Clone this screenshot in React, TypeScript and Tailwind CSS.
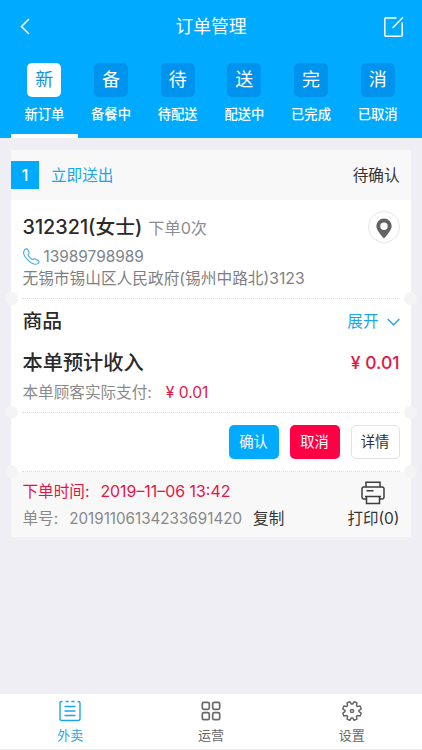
import type { ReactNode } from "react";

interface StatusTab {
  mark: string;
  label: string;
}

const TABS: StatusTab[] = [
  { mark: "新", label: "新订单" },
  { mark: "备", label: "备餐中" },
  { mark: "待", label: "待配送" },
  { mark: "送", label: "配送中" },
  { mark: "完", label: "已完成" },
  { mark: "消", label: "已取消" },
];

function Header() {
  return (
    <header className="h-[138px] bg-[#00aaff] text-white">
      <div className="flex h-[53px] items-center justify-between pl-5 pr-[18px]">
        <svg width="10" height="17" viewBox="0 0 10 17" fill="none" stroke="currentColor" strokeWidth="1.5">
          <path d="M9 1 1.5 8.5 9 16" />
        </svg>
        <h1 className="ml-[8px] text-[17.8px] leading-none">订单管理</h1>
        <svg width="20" height="22" viewBox="0 0 20 22" fill="none" stroke="currentColor" strokeWidth="1.5">
          <path d="M12.5 2H1.8a1 1 0 0 0-1 1v16.2a1 1 0 0 0 1 1h15.4a1 1 0 0 0 1-1V6.5M8.5 12 19 1.2" />
        </svg>
      </div>
      <nav className="flex h-[85px] px-[11px]">
        {TABS.map((tab, i) => (
          <div
            key={tab.label}
            className={
              i === 0
                ? "flex flex-1 flex-col items-center border-b-4 border-white pt-[10px]"
                : "flex flex-1 flex-col items-center border-b-4 border-transparent pt-[10px]"
            }
          >
            <span
              className={
                i === 0
                  ? "flex size-[34px] items-center justify-center rounded-[5px] bg-white text-[18px] leading-none text-[#1593df]"
                  : "flex size-[34px] items-center justify-center rounded-[5px] bg-[#0093ee] text-[18px] leading-none"
              }
            >
              {tab.mark}
            </span>
            <span className="mt-[7px] text-[13.3px] font-medium leading-5">{tab.label}</span>
          </div>
        ))}
      </nav>
    </header>
  );
}

// Dotted line with a round notch over each card edge
function Divider() {
  return (
    <div className="relative mx-[11px] h-0 border-t border-dotted border-[#dedede]">
      <i className="absolute -left-[17px] -top-[7px] size-[13px] rounded-full bg-[#f4f4f5]" />
      <i className="absolute -right-[17px] -top-[7px] size-[13px] rounded-full bg-[#f4f4f5]" />
    </div>
  );
}

function PhoneIcon() {
  return (
    <svg width="17" height="17" viewBox="0 0 24 24" fill="none" stroke="#3aa9e8" strokeWidth="1.5" strokeLinejoin="round">
      <path d="M1.500 4C3 .5 6 .5 7 2.800l1.500 3c.6 1.500-.2 2.300-1.400 3.200-1 .8 5.500 8.200 7 7.200 1.300-1 2.300-1.500 3.500-.7l4 2.400c1.600 1.100 1.300 2.800-.8 4.100C14 26.500-2 11.500 1.500 4Z" />
    </svg>
  );
}

function PrinterIcon() {
  return (
    <svg width="24" height="24" viewBox="0 0 24 24" fill="none" stroke="#3c3c3c" strokeWidth="1.5">
      <path d="M5 6V1.3h14V6M5 18H2.7A1.7 1.7 0 0 1 1 16.3V7.7A1.7 1.7 0 0 1 2.7 6h18.6A1.7 1.7 0 0 1 23 7.7v8.6a1.7 1.7 0 0 1-1.7 1.7H19M4 15.5h16M5.5 15.5v7h13v-7M5.5 9.8h7" />
    </svg>
  );
}

function OrderCard() {
  return (
    <article className="ml-[11px] mr-[11.5px] mt-3 h-[387px] bg-white text-[15.6px] leading-5 text-[#333]">
      <div className="flex h-[50px] items-center bg-[#f8f8f8] pr-[11px]">
        <span className="flex size-7 items-center justify-center bg-[#00aaff] text-[16px] font-medium text-white">1</span>
        <span className="ml-3 pt-px text-[#1ba5ea]">立即送出</span>
        <span className="ml-auto pt-px">待确认</span>
      </div>

      <div className="flex h-[98px] justify-between pl-[11.5px] pr-[11px]">
        <div className="text-[#808080]">
          <div className="flex h-[46px] items-end pb-[5px]">
            <span className="text-[19.8px] font-medium leading-7 text-[#2a2a2a]">312321(女士)</span>
            <span className="ml-[6px] pb-px text-[16.2px] leading-6 text-[#8c8c96]">下单0次</span>
          </div>
          <div className="flex h-[21px] items-center">
            <PhoneIcon />
            <span className="ml-1 text-[15.4px] text-[#7b848c]">13989798989</span>
          </div>
          <div className="h-[22px] pt-px text-[15.7px] leading-[22px]">无锡市锡山区人民政府(锡州中路北)3123</div>
        </div>
        <span className="mt-[11px] flex size-8 items-center justify-center rounded-full border border-[#e6e6e6]">
          <svg width="16" height="21" viewBox="0 0 16 21" fill="#636363" className="mt-[3px]">
            <path fillRule="evenodd" d="M8 .5A7.6 7.6 0 0 0 .3 8.1C.3 13 8 20.5 8 20.5S15.7 13 15.7 8.1A7.6 7.6 0 0 0 8 .5Zm0 4a3.7 3.7 0 1 1 0 7.4 3.7 3.7 0 0 1 0-7.4Z" />
          </svg>
        </span>
      </div>

      <Divider />
      <div className="h-[113px] pl-[11.5px] pr-[11px]">
        <div className="flex h-[44px] items-center justify-between">
          <h2 className="text-[19.8px] font-medium text-[#2a2a2a]">商品</h2>
          <button className="flex items-center gap-2 pt-px text-[#1ba5ea]">
            展开
            <svg width="13" height="8" viewBox="0 0 13 8" fill="none" stroke="currentColor" strokeWidth="1.3">
              <path d="m.7 1 5.8 5.8L12.3 1" />
            </svg>
          </button>
        </div>
        <div className="flex h-[40px] items-center justify-between">
          <h2 className="text-[20.2px] font-medium text-[#2a2a2a]">本单预计收入</h2>
          <span className="text-[17.5px] font-medium text-[#e51445]">¥ 0.01</span>
        </div>
        <div className="flex h-5 items-center text-[#8a8a8a]">
          <span>本单顾客实际支付:</span>
          <span className="ml-[14px] text-[#e51445]">¥ 0.01</span>
        </div>
      </div>

      <Divider />
      <div className="flex h-[58px] items-center justify-end gap-[11px] pr-[11px] text-[14.3px]">
        <button className="h-[34px] w-[50px] rounded-[5px] bg-[#00aaff] text-white">确认</button>
        <button className="h-[34px] w-[50px] rounded-[5px] bg-[#ff0044] text-white">取消</button>
        <button className="h-[34px] w-[49px] rounded-[5px] border border-[#e2e2e2]">详情</button>
      </div>

      <Divider />
      <div className="flex h-[65px] justify-between bg-[#f8f8f8] pl-[11.5px] pr-[11px]">
        <div className="pt-[6px]">
          <div className="flex h-[27px] items-center text-[#e51445]">
            <span>下单时间:</span>
            <span className="ml-[11px] text-[15.9px]">2019–11–06 13:42</span>
          </div>
          <div className="flex h-[27px] items-center text-[#888]">
            <span>单号:</span>
            <span className="ml-[11px] text-[15.2px]">20191106134233691420</span>
            <button className="ml-[11px] text-[#333]">复制</button>
          </div>
        </div>
        <button className="flex flex-col items-center pt-[9px]">
          <PrinterIcon />
          <span className="mt-1 text-[15.5px]">打印(0)</span>
        </button>
      </div>
    </article>
  );
}

// Outline of a cog with eight teeth, centred on (12, 12)
function cogPath() {
  const points: string[] = [];
  const at = (deg: number, r: number) => {
    const a = (deg * Math.PI) / 180;
    points.push(`${(12 + r * Math.cos(a)).toFixed(2)} ${(12 + r * Math.sin(a)).toFixed(2)}`);
  };
  for (let i = 0; i < 8; i++) {
    const mid = i * 45 + 22.5;
    at(mid - 17, 7);
    at(mid - 9, 9.5);
    at(mid + 9, 9.5);
    at(mid + 17, 7);
  }
  return `M${points.join("L")}Z`;
}

function NavItem({ label, active, children }: { label: string; active?: boolean; children: ReactNode }) {
  return (
    <button
      className={
        active
          ? "flex flex-1 flex-col items-center pt-[5px] text-[#1ba5ea]"
          : "flex flex-1 flex-col items-center pt-[5px] text-[#686868]"
      }
    >
      {children}
      <span className="mt-[3px] text-[13px] leading-[18px]">{label}</span>
    </button>
  );
}

function BottomNav() {
  return (
    <nav className="mt-auto flex h-14 border-b border-[#ececec] bg-white">
      <NavItem label="外卖" active>
        <svg width="24" height="24" viewBox="0 0 24 24" fill="none" stroke="currentColor" strokeWidth="1.4">
          <path d="M4.5 2.5h-1A1.5 1.5 0 0 0 2 4v15.500a2 2 0 0 0 2 2h16a2 2 0 0 0 2-2V4a1.500 1.500 0 0 0-1.500-1.500h-1M7.500 2.500h3.200M13.300 2.500h3.200M6.500 7.500h11M6.500 12h11M6.500 16.500h11" />
        </svg>
      </NavItem>
      <NavItem label="运营">
        <svg width="24" height="24" viewBox="0 0 24 24" fill="none" stroke="currentColor" strokeWidth="1.7">
          <rect x="3.3" y="3.3" width="7" height="7" rx="1.5" />
          <rect x="13.7" y="3.3" width="7" height="7" rx="1.5" />
          <rect x="3.3" y="13.7" width="7" height="7" rx="1.5" />
          <rect x="13.7" y="13.7" width="7" height="7" rx="1.5" />
        </svg>
      </NavItem>
      <NavItem label="设置">
        <svg width="24" height="24" viewBox="0 0 24 24" fill="none" stroke="currentColor" strokeWidth="1.5" strokeLinejoin="round">
          <path d={cogPath()} />
          <circle cx="12" cy="12" r="1.6" />
        </svg>
      </NavItem>
    </nav>
  );
}

export default function App() {
  return (
    <div className="flex h-[750px] w-full flex-col overflow-hidden bg-[#efeef4] font-['Inter','Noto_Sans_CJK_SC',sans-serif]">
      <Header />
      <OrderCard />
      <BottomNav />
    </div>
  );
}
